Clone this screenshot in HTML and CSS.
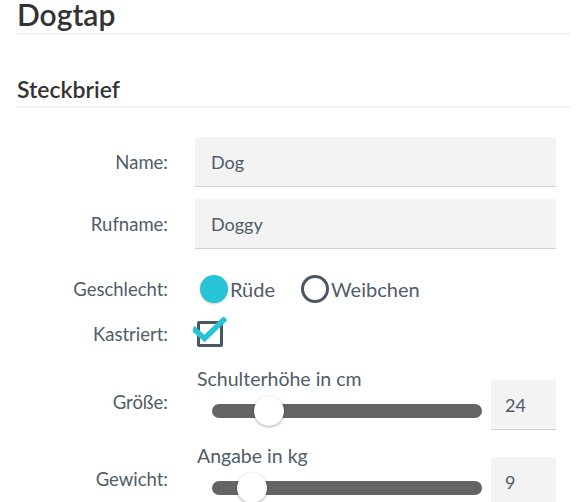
FILE: index.html
```html
<!DOCTYPE html>
<html lang="de">
<head>
    <meta charset="UTF-8">
    <meta name="viewport" content="width=device-width, initial-scale=1.0">
    <title>Dogtap</title>
    <link rel="stylesheet" href="styles.css">
</head>
<body>
    <div class="page">
        <h1>Dogtap</h1>

        <h2>Steckbrief</h2>

        <form class="profile">
            <!-- Name -->
            <div class="field field-text">
                <label for="name">Name:</label>
                <input type="text" id="name" class="text-input" value="Dog">
            </div>

            <div class="field field-text">
                <label for="callname">Rufname:</label>
                <input type="text" id="callname" class="text-input" value="Doggy">
            </div>

            <!-- Geschlecht -->
            <div class="field field-gender">
                <label>Geschlecht:</label>
                <div class="options">
                    <label class="option"><input type="radio" name="gender" value="m" checked>Rüde</label>
                    <label class="option"><input type="radio" name="gender" value="w">Weibchen</label>
                </div>
            </div>

            <div class="field field-check">
                <label for="neutered">Kastriert:</label>
                <span class="check">
                    <input type="checkbox" id="neutered" checked>
                    <svg class="tick" width="34" height="26" viewBox="0 0 34 26">
                        <path d="M2 13 L11.5 21.5 L30.5 3" fill="none" stroke="#27c3d6" stroke-width="5.5" stroke-linecap="square"/>
                    </svg>
                </span>
            </div>

            <!-- Sliders -->
            <div class="field field-range">
                <label for="height">Größe:</label>
                <div class="range-wrap">
                    <div class="range-col">
                        <span class="caption">Schulterhöhe in cm</span>
                        <input type="range" id="height" min="10" max="90" value="24">
                    </div>
                    <input type="text" class="text-input small" value="24">
                </div>
            </div>

            <div class="field field-range">
                <label for="weight">Gewicht:</label>
                <div class="range-wrap">
                    <div class="range-col">
                        <span class="caption">Angabe in kg</span>
                        <input type="range" id="weight" min="2" max="70" value="9">
                    </div>
                    <input type="text" class="text-input small" value="9">
                </div>
            </div>
        </form>
    </div>
</body>
</html>
```

FILE: styles.css
```css
body {
    font-family: Lato, "Open Sans", sans-serif;
    background-color: #fff;
    color: #4f5c69;
    margin: 0;
}
.page {
    padding: 0 12px 0 17px;
}
h1 {
    font-size: 30px;
    font-weight: 600;
    line-height: 28px;
    color: #333;
    margin: 0;
    padding: 0 0 5px;
    border-bottom: 2px solid #eef2f6;
}
h2 {
    font-size: 23px;
    font-weight: 600;
    line-height: 26px;
    color: #333;
    margin: 41px 0 0;
    padding-bottom: 4px;
    border-bottom: 2px solid #eef2f6;
}
.profile {
    margin-top: 29px;
    padding-right: 14px;
}
.field {
    display: grid;
    grid-template-columns: 151px 1fr;
    column-gap: 27px;
    align-items: center;
    font-size: 18.5px;
}
.field > label {
    text-align: right;
}
.field-text {
    margin-bottom: 12px;
}
.text-input {
    font-family: inherit;
    font-size: 18px;
    color: #4f5c69;
    height: 50px;
    box-sizing: border-box;
    padding: 0 16px;
    border: none;
    border-bottom: 1px solid #cfcfcf;
    background-color: #f3f3f3;
    outline: none;
    width: 100%;
}
.field-gender {
    margin-top: 25px;
    height: 30px;
}
.options {
    display: flex;
    gap: 26px;
    margin-left: 5px;
    font-size: 20px;
}
.option {
    display: flex;
    align-items: center;
}
.option input {
    appearance: none;
    margin: 0 2px 0 0;
    width: 28px;
    height: 28px;
    border-radius: 50%;
    border: 3px solid #4a5661;
    box-sizing: border-box;
}
.option input:checked {
    border: none;
    background-color: #27c3d6;
    box-shadow: 0 1px 2px rgba(0, 0, 0, 0.2);
}
.field-check {
    margin-top: 17px;
    height: 26px;
}
.check {
    position: relative;
    width: 26px;
    height: 26px;
    margin-left: 2px;
}
.check input {
    appearance: none;
    margin: 0;
    width: 26px;
    height: 26px;
    box-sizing: border-box;
    border: 3px solid #4a5661;
    border-radius: 2px;
}
.tick {
    position: absolute;
    left: -4px;
    top: -4px;
}
.field-range {
    margin-top: 21px;
}
.field-range + .field-range {
    margin-top: 15px;
}
.field-range > label {
    padding-top: 6px;
}
.range-wrap {
    display: flex;
    align-items: flex-end;
    gap: 9px;
}
.range-col {
    flex: 1;
    display: flex;
    flex-direction: column;
    padding-bottom: 4px;
}
.caption {
    font-size: 19.5px;
    line-height: 22px;
    margin-left: 2px;
}
.text-input.small {
    width: 65px;
    padding: 0 14px;
}
input[type="range"] {
    -webkit-appearance: none;
    appearance: none;
    margin: 6px 0 0 17px;
    height: 30px;
    background: transparent;
}
input[type="range"]::-webkit-slider-runnable-track {
    height: 14px;
    border-radius: 7px;
    background-color: #646464;
}
input[type="range"]::-webkit-slider-thumb {
    -webkit-appearance: none;
    width: 30px;
    height: 30px;
    margin-top: -8px;
    border-radius: 50%;
    background-color: #fff;
    box-shadow: 0 1px 3px rgba(0, 0, 0, 0.35);
}
```
